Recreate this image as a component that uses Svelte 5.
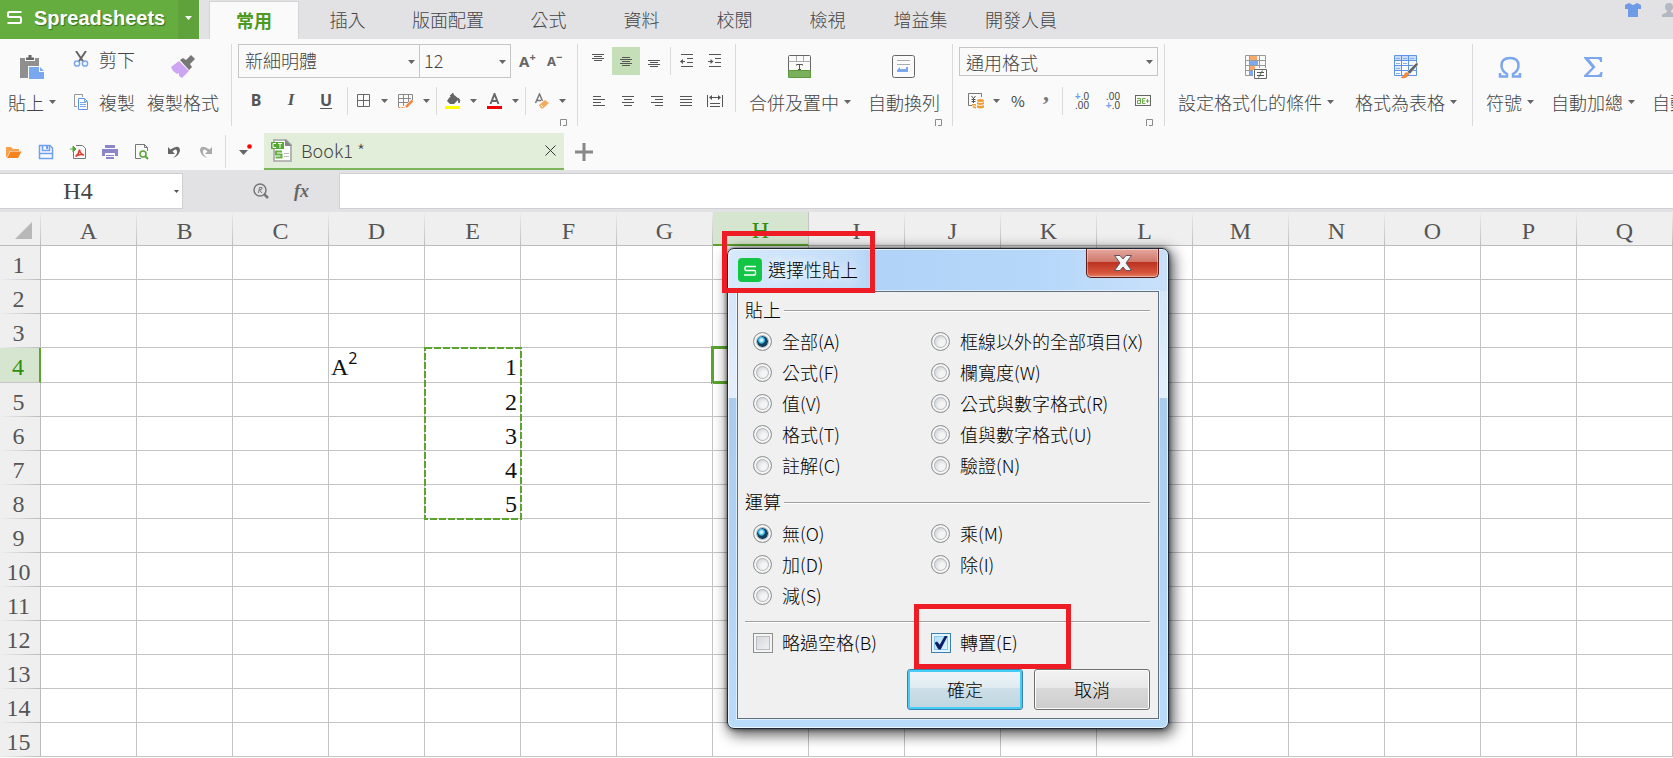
<script>
	const tabs = ['常用', '插入', '版面配置', '公式', '資料', '校閱', '檢視', '增益集', '開發人員'];
	const columns = 'ABCDEFGHIJKLMNOPQ'.split('');
	const rows = Array.from({ length: 15 }, (_, i) => i + 1);

	// values in column E, by row
	const values = { 4: 1, 5: 2, 6: 3, 7: 4, 8: 5 };

	const pasteOptions = [
		['all', '全部(A)'],
		['noborder', '框線以外的全部項目(X)'],
		['formula', '公式(F)'],
		['width', '欄寬度(W)'],
		['value', '值(V)'],
		['formulanum', '公式與數字格式(R)'],
		['format', '格式(T)'],
		['valuenum', '值與數字格式(U)'],
		['comment', '註解(C)'],
		['validation', '驗證(N)']
	];
	const mathOptions = [
		['none', '無(O)'],
		['multiply', '乘(M)'],
		['add', '加(D)'],
		['divide', '除(I)'],
		['subtract', '減(S)']
	];

	// horizontal strokes of the alignment icons: x, y, width
	const alignIcons = {
		top: [[2, 1, 12], [4, 3, 8], [2, 5, 12], [4, 7, 8]],
		middle: [[4, 4, 8], [2, 6, 12], [4, 8, 8], [2, 10, 12], [4, 12, 8]],
		bottom: [[2, 7, 12], [4, 9, 8], [2, 11, 12], [4, 13, 8]],
		left: [[2, 3, 8], [2, 6, 12], [2, 9, 8], [2, 12, 12]],
		center: [[2, 3, 12], [4, 6, 8], [2, 9, 12], [4, 12, 8]],
		right: [[2, 3, 12], [6, 6, 8], [2, 9, 12], [6, 12, 8]],
		justify: [[2, 3, 12], [2, 6, 12], [2, 9, 12], [2, 12, 12]]
	};

	let activeTab = $state('常用');
	let valign = $state('middle');
	let paste = $state('all');
	let math = $state('none');
	let skipBlanks = $state(false);
	let transpose = $state(true);
	let cellName = $state('H4');
	let formula = $state('');
</script>

{#snippet caret()}
	<svg class="caret" width="7" height="4" viewBox="0 0 7 4" aria-hidden="true"><path d="M0 0h7L3.5 4z" fill="currentColor" /></svg>
{/snippet}

{#snippet launcher(label)}
	<button class="launcher" aria-label={label}>
		<svg width="7" height="7" viewBox="0 0 7 7"><path d="M.5 7V.5H6.500V6.500H3" fill="none" stroke="#8a8a8a" /></svg>
	</button>
{/snippet}

{#snippet lines(name)}
	<svg width="16" height="16" viewBox="0 0 16 16" fill="#555">
		{#each alignIcons[name] as [x, y, w]}<rect {x} {y} width={w} height="1" />{/each}
	</svg>
{/snippet}

{#snippet radio(group, value, label, checked, pick)}
	<label class="option">
		<input type="radio" name={group} {value} {checked} onchange={() => pick(value)} />
		<span>{label}</span>
	</label>
{/snippet}

<div class="app">
	<header class="topbar">
		<button class="brand">
			<svg width="15" height="13" viewBox="0 0 15 13" fill="none" stroke="#fff" stroke-width="2"><path d="M14.500 1H2.500Q1 1 1 2.500V4.500Q1 6 2.500 6H12.500Q14 6 14 7.500V10.500Q14 12 12.500 12H.5" /></svg>
			<span>Spreadsheets</span>
		</button>
		<button class="brand-more" aria-label="選單">{@render caret()}</button>
		<nav class="tabs">
			{#each tabs as tab}
				<button class="tab" class:active={tab === activeTab} onclick={() => (activeTab = tab)}>{tab}</button>
			{/each}
		</nav>
		<div class="account">
			<svg width="16" height="14" viewBox="0 0 16 14" fill="#6f9be6"><path d="M4 0L6 1Q8 3 10 1L12 0L16 2V6H13V14H3V6H0V2z" /></svg>
			<svg width="16" height="14" viewBox="0 0 16 14" fill="#b3b9c3"><ellipse cx="8" cy="4" rx="4" ry="4" /><path d="M6 7H10V9L15 11.500V14H1V11.500L6 9z" /></svg>
		</div>
	</header>

	<div class="ribbon">
		<section class="group clipboard">
			<button class="big">
				<svg width="24" height="24" viewBox="0 0 24 24"><path d="M0 3H5V6H15V3H19V11H8V23H0z" fill="#8f8f8f" /><path d="M6 5V2.500H8.500V0H11.500V2.500H14V5z" fill="#666" /><path d="M9 12H19V17H24V24H9z" fill="#7ba7ee" /><path d="M20 12L24 16H20z" fill="#7ba7ee" /></svg>
				<span>貼上{@render caret()}</span>
			</button>
			<div class="stack">
				<button class="small">
					<svg width="16" height="16" viewBox="0 0 16 16" fill="none"><path d="M3 0L10.500 11M13 0L5.500 11" stroke="#666" stroke-width="2" /><circle cx="4" cy="12.500" r="2.600" stroke="#7ba7ee" stroke-width="1.500" /><circle cx="12" cy="12.500" r="2.600" stroke="#7ba7ee" stroke-width="1.500" /></svg>
					剪下
				</button>
				<button class="small">
					<svg width="16" height="16" viewBox="0 0 16 16" fill="none"><path d="M4 12.500H1.500V.5H9.500V3" stroke="#999" /><path d="M5.500 4.500H11.500L14.500 7.500V15.500H5.500z" fill="#fff" stroke="#5f93e8" /><path d="M7 8.500H13M7 10.500H13M7 12.500H13M11.500 4.500V7.500H14.500" stroke="#7ba7ee" /></svg>
					複製
				</button>
			</div>
			<button class="big">
				<svg width="24" height="24" viewBox="0 0 24 24"><path d="M0 12L8 6L18 16L11 23L8 21V18L6 19L2 16z" fill="#cda5f3" /><path d="M9 5L12 3L15 5L20 0L24 4L19 9L21 12L18 15z" fill="#777" /></svg>
				<span>複製格式</span>
			</button>
		</section>

		<section class="group font">
			<div class="line selects">
				<div class="pick face">
					<select aria-label="字型"><option>新細明體</option></select>
					{@render caret()}
				</div>
				<div class="pick size">
					<select aria-label="字型大小"><option>12</option></select>
					{@render caret()}
				</div>
				<button class="grow" aria-label="放大字型">A<sup>+</sup></button>
				<button class="grow less" aria-label="縮小字型">A<sup>−</sup></button>
			</div>
			<div class="line">
				<button class="letter bold">B</button>
				<button class="letter italic">I</button>
				<button class="letter under">U</button>
				<i class="sep"></i>
				<button class="split" aria-label="框線">
					<svg width="16" height="16" viewBox="0 0 16 16"><path d="M1.500 1.500H13.500V13.500H1.500zM7.500 1.500V13.500M1.500 7.500H13.500" fill="none" stroke="#666" /></svg>
					{@render caret()}
				</button>
				<button class="split next" aria-label="繪製框線">
					<svg width="16" height="16" viewBox="0 0 16 16" fill="none"><path d="M.5 14V1.500H14.500V7M5.500 1V13M10.500 1V9M0 5.500H13M0 9.500H10" stroke="#888" /><path d="M.5 14.500H7" stroke="#f08a45" stroke-dasharray="2 1" /><path d="M8 14L14.500 7.500" stroke="#f08a45" stroke-width="2.500" /></svg>
					{@render caret()}
				</button>
				<i class="sep"></i>
				<button class="split" aria-label="填滿色彩">
					<svg width="16" height="16" viewBox="0 0 16 16"><path d="M4 5L8 1L14 6L9 11H5L2 8z" fill="#666" /><path d="M5 3L8 0V5M13 5Q16 7 14 10z" stroke="#666" fill="#666" /><rect y="13" width="15" height="3" fill="#ff0" /></svg>
					{@render caret()}
				</button>
				<button class="split next" aria-label="字型色彩">
					<svg width="16" height="16" viewBox="0 0 16 16"><path d="M3.500 11L7.500 1L11.500 11M5 8H10" fill="none" stroke="#666" stroke-width="2" /><rect y="13" width="15" height="3" fill="#f00000" /></svg>
					{@render caret()}
				</button>
				<i class="sep"></i>
				<button class="split" aria-label="清除">
					<svg width="16" height="16" viewBox="0 0 16 16"><path d="M1.500 10L5.500 1L8.500 8M3 7.500H7" fill="none" stroke="#777" stroke-width="1.500" /><path d="M5 12L11 7L15 10L9 15.500H7z" fill="#f2ab5b" /><path d="M7 12L9 14" stroke="#fff" /></svg>
					{@render caret()}
				</button>
			</div>
			{@render launcher('字型設定')}
		</section>

		<section class="group align">
			<div class="line">
				{#each ['top', 'middle', 'bottom'] as name}
					<button class="cell" class:on={valign === name} aria-label={name} onclick={() => (valign = name)}>{@render lines(name)}</button>
				{/each}
				<i class="sep tight"></i>
				<button class="cell" aria-label="減少縮排">
					<svg width="16" height="16" viewBox="0 0 16 16" fill="none" stroke="#555"><path d="M2 1.500H14M8 5.500H14M8 9.500H14M2 13.500H14M1.500 8.500H6" /><path d="M1 8.500L4 6V11z" fill="#555" stroke="none" /></svg>
				</button>
				<button class="cell" aria-label="增加縮排">
					<svg width="16" height="16" viewBox="0 0 16 16" fill="none" stroke="#555"><path d="M2 1.500H14M8 5.500H14M8 9.500H14M2 13.500H14M1 8.500H5" /><path d="M6.500 8.500L3.500 6V11z" fill="#555" stroke="none" /></svg>
				</button>
			</div>
			<div class="line">
				{#each ['left', 'center', 'right', 'justify'] as name}
					<button class="cell wide" aria-label={name}>{@render lines(name)}</button>
				{/each}
				<button class="cell wide" aria-label="分散對齊">
					<svg width="16" height="16" viewBox="0 0 16 16" fill="none" stroke="#555"><path d="M.5 2V14M15.500 2V14M3 4.500H13M3 10.500H13M3 13.500H13" /><path d="M2 4.500L5 2V7zM14 4.500L11 2V7z" fill="#555" stroke="none" /></svg>
				</button>
			</div>
		</section>

		<section class="group merge">
			<button class="big">
				<svg width="24" height="24" viewBox="0 0 24 24" fill="none"><rect x="1" y="16" width="22" height="7" fill="#7ab05c" /><path d="M.5 16.500V1.500Q.5.5 1.500.5H21.500Q22.500.5 22.500 1.500V16" stroke="#666" /><path d="M.5 6.500H22.500M8.500 1V6M15.500 1V6" stroke="#aaa" /><path d="M.5 15.500H22.500V22.500H.5z" stroke="#5c9a3b" /><path d="M8.500 10.500V9.500H14.500V10.500M11.500 9.500V14M10 14.500H13" stroke="#555" /></svg>
				<span>合併及置中{@render caret()}</span>
			</button>
			<button class="big">
				<svg width="24" height="24" viewBox="0 0 24 24" fill="none"><rect x=".5" y=".5" width="22" height="22" rx="2" stroke="#666" /><path d="M5 5.500H18M5 9.500H18" stroke="#aaa" /><path d="M5 15L8 12V14H14V12H16V17H5z" fill="#7ba7ee" /></svg>
				<span>自動換列</span>
			</button>
			{@render launcher('對齊設定')}
		</section>

		<section class="group number">
			<div class="line">
				<div class="pick format">
					<select aria-label="數值格式"><option>通用格式</option></select>
					{@render caret()}
				</div>
			</div>
			<div class="line formats">
				<button class="split" aria-label="貨幣">
					<svg width="16" height="16" viewBox="0 0 16 16" fill="none"><path d="M4 12.500H.5V.5H13.500V4" stroke="#777" /><path d="M3.500 3L5.500 5.500L7.500 3M5.500 5V10M3.500 6.500H7.500M3.500 8.500H7.500" stroke="#555" /><ellipse cx="12.500" cy="7.500" rx="3.500" ry="1.500" fill="#f09c33" /><path d="M9 9Q12.500 11 16 9V11Q12.500 13 9 11zM9 12Q12.500 14 16 12V14.500Q12.500 16.500 9 14.500zM4 11H8V12.500H4zM4 13.500H8V15.500Q5 15.500 4 13.500z" fill="#f09c33" /></svg>
					{@render caret()}
				</button>
				<button class="cell percent">%</button>
				<button class="cell comma">,</button>
				<i class="sep tight"></i>
				<button class="cell digits" aria-label="增加小數位數"><span><b>+</b>.0</span><span>.00</span></button>
				<button class="cell digits" aria-label="減少小數位數"><span>.00</span><span><b>+</b>.0</span></button>
				<button class="cell last" aria-label="文字格式">
					<svg width="16" height="12" viewBox="0 0 16 12" fill="none"><rect x=".5" y=".5" width="15" height="10" stroke="#666" /><path d="M2 3.500H5.500V8.500H2.500V5.500H5M10.500 3.500H7.500V8.500H10.500M7.500 6H10M11 6H14.500M12.500 4V8" stroke="#6aa84a" /></svg>
				</button>
			</div>
			{@render launcher('數值設定')}
		</section>

		<section class="group styles">
			<button class="big">
				<svg width="24" height="24" viewBox="0 0 24 24" fill="none"><path d="M6 1H13V5H6zM6 11H11V15H6z" fill="#f8a86a" /><path d="M6 6H14V10H6zM6 16H9V20H6z" fill="#7ea9f2" /><path d="M1.500.5H21.500V13M9 20.500H1.500V.5M5.500 1V20M15.500 1V13M2 5.500H21M2 10.500H21M2 15.500H9" stroke="#999" /><path d="M10.500 14.500H22.500V23.500H10.500z" fill="#fff" stroke="#666" /><path d="M13 17.500H20M13 20.500H20M18.500 15.500L14.500 22.500" stroke="#555" /></svg>
				<span>設定格式化的條件{@render caret()}</span>
			</button>
			<button class="big">
				<svg width="24" height="24" viewBox="0 0 24 24" fill="none"><path d="M1 1H22V5H1z" fill="#c8dafa" /><path d="M1 10H8V15H1z" fill="#dce8fc" /><path d="M.5.5H22.500V20.500H.5zM7.500 1V20M14.500 1V20M1 5.500H22M1 10.500H22M1 15.500H22" stroke="#5f93e8" /><path d="M2 3.500H6M9 3.500H13M16 3.500H20M2 8.500H6M9 8.500H13M2 13.500H6M2 18.500H6" stroke="#8bb1f0" /><path d="M13 17L22 8H24V10L16 19z" fill="#666" stroke="#fff" stroke-width=".5" /><path d="M7 22Q10 21 11 18Q13 16 15 19Q14 24 7 23z" fill="#f08a3c" /></svg>
				<span>格式為表格{@render caret()}</span>
			</button>
		</section>

		<section class="group sums">
			<button class="big">
				<svg width="24" height="24" viewBox="0 0 24 24" fill="none"><path d="M2 18V21.500H9V19Q3.500 16 3.500 10.500Q3.500 3 12 3Q20.500 3 20.500 10.500Q20.500 16 15 19V21.500H22V18" stroke="#7ba7ee" stroke-width="2.500" /></svg>
				<span>符號{@render caret()}</span>
			</button>
			<button class="big">
				<svg width="24" height="24" viewBox="0 0 24 24"><path d="M3 2H21V7H19Q19 4 16 4H8L14.500 12L7 20H16Q19 20 19.500 17H21.500L21 22H3V20.500L11 12.500L3 3z" fill="#7ba7ee" /></svg>
				<span>自動加總{@render caret()}</span>
			</button>
			<button class="big">
				<svg width="24" height="24" viewBox="0 0 24 24"><path d="M2 2H22L14 12V22L10 19V12z" fill="#7ba7ee" /></svg>
				<span>自動篩選{@render caret()}</span>
			</button>
		</section>
	</div>

	<div class="docbar">
		<div class="quick">
			<button aria-label="開啟"><svg width="16" height="16" viewBox="0 0 16 16"><path d="M0 3H5L7 5H13V7H4L1 13H0z" fill="#f8a04a" /><path d="M4.500 7.500H15.500L12 14H1z" fill="#f5841f" /></svg></button>
			<button aria-label="儲存"><svg width="16" height="16" viewBox="0 0 16 16" fill="none"><path d="M1.500 1.500H12L14.500 4V14.500H1.500z" stroke="#6f9ff0" stroke-width="1.500" /><path d="M4.500 2V6.500H11.500V2M2 9.500H14" stroke="#6f9ff0" stroke-width="1.500" /><path d="M9 2V5" stroke="#6f9ff0" stroke-width="2" /></svg></button>
			<button aria-label="匯出PDF"><svg width="16" height="16" viewBox="0 0 16 16" fill="none"><path d="M6 1.500H12.500L15.500 4.500V14.500H3.500V8" stroke="#777" /><path d="M0 5H3M3 2L6 5L3 8z" stroke="#58a33a" fill="#58a33a" /><path d="M5.500 12.500Q9 10 9.500 5.500Q10 10 14 11Q10 9.500 5.500 12.500" stroke="#e03a2f" stroke-width="1.500" /></svg></button>
			<button aria-label="列印"><svg width="16" height="16" viewBox="0 0 16 16"><path d="M3 1H13V4H3zM0 5H16V12H13V9H3V12H0zM4 11H12V12H4zM4 13H12V15H4z" fill="#8a86c8" /></svg></button>
			<button aria-label="預覽列印"><svg width="16" height="16" viewBox="0 0 16 16" fill="none"><path d="M7 14.500H1.500V.5H10.500L13.500 3.500V7" stroke="#777" /><path d="M10.500.5V3.500H13.500" stroke="#777" /><circle cx="9" cy="10" r="3" stroke="#58a33a" stroke-width="1.500" /><path d="M11 12L14 15" stroke="#58a33a" stroke-width="2" /></svg></button>
			<button aria-label="復原"><svg width="16" height="16" viewBox="0 0 16 16"><path d="M2 3V10H9L6.500 7.500Q10 4 11 7Q12 10 7 14Q14 11 14 6Q13 0 4.500 5.500z" fill="#666" /></svg></button>
			<button aria-label="重做"><svg width="16" height="16" viewBox="0 0 16 16"><path d="M14 3V10H7L9.500 7.500Q6 4 5 7Q4 10 9 14Q2 11 2 6Q3 0 11.500 5.500z" fill="#aaa" /></svg></button>
		</div>
		<i class="sep tall"></i>
		<button class="recent" aria-label="最近使用"><svg width="14" height="12" viewBox="0 0 14 12"><path d="M0 6H9L4.500 11z" fill="#666" /><circle cx="10.500" cy="2.500" r="2.300" fill="#f00" /></svg></button>
		<div class="doc">
			<svg width="22" height="24" viewBox="0 0 22 24"><path d="M3 1H15L20 6V22H3z" fill="#fff" stroke="#b5b5b5" stroke-width="2" /><path d="M14 0L21 7H14z" fill="#888" /><rect y="3" width="13" height="7" fill="#58a835" /><path d="M5 4.500H2V8.500H5M7 4.500H11M9 4.500V9" stroke="#fff" fill="none" /><path d="M11 12.500H5V15.500H10.500V18.500H4.500" stroke="#66b042" stroke-width="2" fill="none" /><path d="M13 14.500H18M13 17.500H18M6 21.500H18" stroke="#bbb" /></svg>
			<span>Book1 *</span>
			<button aria-label="關閉"><svg width="11" height="11" viewBox="0 0 11 11"><path d="M.5.5L10.500 10.500M10.500.5L.5 10.500" stroke="#333" /></svg></button>
		</div>
		<button class="add" aria-label="新增活頁簿"><svg width="18" height="18" viewBox="0 0 18 18"><path d="M9 0V18M0 9H18" stroke="#888" stroke-width="3" /></svg></button>
	</div>

	<div class="formulabar">
		<div class="namebox">
			<input aria-label="名稱方塊" bind:value={cellName} />
			<svg width="5" height="3" viewBox="0 0 5 3" aria-hidden="true"><path d="M0 0H5L2.500 3z" fill="#555" /></svg>
		</div>
		<div class="fx">
			<button aria-label="搜尋"><svg width="16" height="16" viewBox="0 0 16 16" fill="none" stroke="#777"><circle cx="7" cy="7" r="6" stroke-width="1.500" /><path d="M11 11L15 15" stroke-width="2.500" /><path d="M5.500 10L6.500 4.500H9Q10 6.500 6.500 7L9 10" /></svg></button>
			<button class="fn">fx</button>
		</div>
		<input class="formula" aria-label="公式" bind:value={formula} />
	</div>

	<div class="sheet">
		<table>
			<thead>
				<tr>
					<th class="corner"><svg width="17" height="17" viewBox="0 0 17 17"><path d="M17 0V17H0z" fill="#b8b8b8" /></svg></th>
					{#each columns as col}
						<th class:current={col === 'H'}>{col}</th>
					{/each}
				</tr>
			</thead>
			<tbody>
				{#each rows as row}
					<tr class:taller={row === 4}>
						<th class:current={row === 4}>{row}</th>
						{#each columns as col}
							{#if col === 'D' && row === 4}
								<td>A<sup>2</sup></td>
							{:else if col === 'E' && values[row]}
								<td class="num">
									{values[row]}
									{#if row === 4}
										<svg class="ants" width="98" height="173" viewBox="0 0 98 173"><rect x="1" y="1" width="96" height="171" fill="none" stroke="#5ba52f" stroke-width="2" stroke-dasharray="7 2" /></svg>
									{/if}
								</td>
							{:else if col === 'H' && row === 4}
								<td><div class="cursor"></div></td>
							{:else}
								<td></td>
							{/if}
						{/each}
					</tr>
				{/each}
			</tbody>
		</table>
	</div>

	<div class="dialog" role="dialog" aria-labelledby="dialog-title">
		<div class="titlebar">
			<svg width="24" height="24" viewBox="0 0 24 24" fill="none"><rect width="24" height="24" rx="4" fill="#12c544" /><path d="M18 8.500H8Q7 8.500 7 10V11Q7 12.500 8 12.500H16.500Q17.500 12.500 17.500 14V15.500Q17.500 17 16.500 17H6" stroke="#fff" stroke-width="1.500" /></svg>
			<h2 id="dialog-title">選擇性貼上</h2>
			<button class="close" aria-label="關閉">
				<svg width="20" height="18" viewBox="0 0 20 18"><path d="M1.500 1.500H7L10 5L13 1.500H18.500L13 9L18.500 16.500H13L10 13L7 16.500H1.500L7 9z" fill="#f6f6f6" stroke="#5b5560" /></svg>
			</button>
		</div>
		<div class="client">
			<div role="radiogroup" aria-labelledby="legend-paste">
				<div class="legend"><span id="legend-paste">貼上</span></div>
				<div class="options">
					{#each pasteOptions as [value, label]}
						{@render radio('paste', value, label, paste === value, (v) => (paste = v))}
					{/each}
				</div>
			</div>
			<div class="math" role="radiogroup" aria-labelledby="legend-math">
				<div class="legend"><span id="legend-math">運算</span></div>
				<div class="options">
					{#each mathOptions as [value, label]}
						{@render radio('math', value, label, math === value, (v) => (math = v))}
					{/each}
				</div>
			</div>
			<div class="options checks">
				<label class="option">
					<input type="checkbox" bind:checked={skipBlanks} />
					<span>略過空格(B)</span>
				</label>
				<label class="option">
					<input type="checkbox" bind:checked={transpose} />
					<span>轉置(E)</span>
				</label>
			</div>
			<div class="actions">
				<button class="ok">確定</button>
				<button>取消</button>
			</div>
		</div>
		<div class="mark mark-title"></div>
		<div class="mark mark-transpose"></div>
	</div>
</div>

<style>
	:global(body) {
		background: #fff;
	}

	.app {
		--bar: #e2e2e4;
		--panel: #fafafa;
		--green: #5ba52f;
		--rule: #dadadc;
		position: relative;
		min-height: 100vh;
		overflow: hidden;
		color: #444;
		font: 300 18px/28px "Noto Sans CJK TC", "Liberation Sans", sans-serif;
	}

	.app :is(button, input, select) {
		box-sizing: border-box;
		margin: 0;
		padding: 0;
		border: 0;
		border-radius: 0;
		background: none;
		color: inherit;
		font: inherit;
		outline: none;
	}

	.app :is(button, h2, svg) {
		flex: none;
	}

	svg {
		display: block;
	}

	.caret {
		color: #666;
	}

	/* top bar */
	.topbar {
		display: flex;
		height: 39px;
		background: var(--bar);
	}

	.topbar .brand {
		display: flex;
		align-items: center;
		gap: 12px;
		width: 178px;
		padding: 0 0 4px 7px;
		background: #66ad3f;
		color: #fff;
		font: bold 20px/28px "Liberation Sans", sans-serif;
		text-shadow: 1px 1px 1px #35701a;
	}

	.topbar .brand-more {
		display: grid;
		place-items: center;
		width: 21px;
		padding-bottom: 3px;
		background: #5fa23c;
	}

	.brand-more .caret {
		color: #fff;
	}

	.tabs {
		display: flex;
		padding-left: 8px;
	}

	.tabs .tab {
		min-width: 93px;
		padding: 0 18px 2px;
	}

	.tabs .active {
		min-width: 90px;
		margin: 1px 2px 0;
		border: 1px solid #d4d4d6;
		border-bottom: 0;
		background: var(--panel);
		color: #4c9a22;
		font-weight: 700;
	}

	.account {
		display: flex;
		gap: 20px;
		margin-left: auto;
		margin-right: -4px;
		padding-top: 3px;
	}

	/* ribbon */
	.ribbon {
		display: flex;
		height: 82px;
		padding: 5px 0 7px;
		background: var(--panel);
	}

	.group {
		display: flex;
		flex: none;
		border-right: 1px solid var(--rule);
	}

	.big {
		display: flex;
		flex-direction: column;
		align-items: center;
		gap: 9px;
		align-self: start;
		margin-top: 11px !important;
	}

	.big span {
		display: flex;
		align-items: center;
		gap: 5px;
		white-space: nowrap;
	}

	.clipboard {
		padding: 0 12px 0 8px;
	}

	.stack {
		display: flex;
		flex-direction: column;
		gap: 15px;
		margin: 1px 12px 0 17px;
	}

	.small {
		display: flex;
		align-items: center;
		gap: 10px;
	}

	.font,
	.align,
	.number {
		display: grid;
		grid-template-rows: 34px 28px 2px;
		row-gap: 9px;
	}

	.font {
		padding: 0 10px 0 4px;
	}

	.line {
		display: flex;
		align-items: center;
	}

	.selects {
		padding-left: 2px;
	}

	.pick {
		display: grid;
		align-items: center;
		border: 1px solid #c6c6c8;
	}

	.pick > :global(*) {
		grid-area: 1 / 1;
	}

	.pick .caret {
		justify-self: end;
		margin: 2px 4px 0 0;
		pointer-events: none;
	}

	.app .pick select {
		width: 100%;
		height: 32px;
		padding: 0 0 3px 6px;
		appearance: none;
	}

	.pick {
		box-sizing: border-box;
	}

	.face {
		width: 182px;
	}

	.size {
		width: 91px;
		border-left: 0;
	}

	.app .size select {
		padding-left: 4px;
	}

	.format {
		width: 199px;
	}

	.app .format select {
		height: 27px;
	}

	.app .grow {
		width: 26px;
		margin-left: 8px;
		color: #666;
		font: bold 15px/28px "Noto Sans", sans-serif;
		text-align: left;
		white-space: nowrap;
	}

	.app .grow.less {
		width: 20px;
		margin-left: 2px;
		font-size: 13px;
	}

	.grow sup {
		font-size: 11px;
		line-height: 1px;
	}

	.app .letter {
		width: 35px;
		padding: 0 0 2px 5px;
		color: #555;
		font: bold 16px/24px "Noto Sans", sans-serif;
	}

	.app .italic {
		font: italic bold 17px/24px "Liberation Serif", serif;
	}

	.under {
		text-decoration: underline;
		text-underline-offset: 2px;
	}

	.sep {
		width: 1px;
		height: 28px;
		margin: 0 8px 0 6px;
		background: var(--rule);
	}

	.sep.tight {
		margin: 0 2px;
	}

	.split {
		display: flex;
		align-items: center;
		gap: 9px;
	}

	.app .next {
		margin-left: 10px;
	}

	.launcher {
		justify-self: end;
		align-self: end;
		height: 7px;
	}

	.align {
		height: 68px;
		padding: 0 6px;
	}

	.cell {
		display: grid;
		place-items: center;
		width: 28px;
		height: 28px;
	}

	.app .cell.on {
		background: #c5e0b8;
	}

	.cell.wide {
		width: 29px;
	}

	.merge {
		gap: 17px;
		padding: 0 10px 0 13px;
	}

	.merge .launcher {
		margin-left: -22px;
	}

	.number {
		padding: 0 6px;
	}

	.number .launcher {
		margin-right: 5px;
	}

	.formats {
		padding-left: 9px;
	}

	.app .percent {
		margin-left: 4px;
		font-size: 15px;
		font-weight: 400;
	}

	.app .comma {
		padding-bottom: 18px;
		color: #777;
		font: bold 24px/10px "Liberation Serif", serif;
	}

	.app .digits {
		width: 31px;
		align-content: center;
		justify-items: end;
		padding-right: 7px;
		font: 400 10px/9px "Liberation Sans", sans-serif;
	}

	.digits b {
		color: #6f9ff0;
	}

	.app .last {
		width: 31px;
	}

	.styles {
		gap: 21px;
		padding: 0 15px 0 13px;
	}

	.sums {
		gap: 17px;
		padding-left: 13px;
		border: 0;
	}

	/* document tabs */
	.docbar {
		display: flex;
		align-items: center;
		height: 37px;
		background: var(--panel);
	}

	.quick {
		display: flex;
		gap: 16px;
		padding-left: 6px;
	}

	.sep.tall {
		height: 33px;
		margin: 0 13px 0 11px;
	}

	.app .recent {
		width: 25px;
		padding-bottom: 4px;
	}

	.doc {
		box-sizing: border-box;
		display: flex;
		align-items: center;
		width: 300px;
		height: 37px;
		padding: 0 8px 0 7px;
		border-bottom: 2px solid #7cb65c;
		background: #e2eed9;
	}

	.doc span {
		flex: 1;
		padding: 0 0 2px 8px;
	}

	.app .add {
		margin-left: 11px;
	}

	/* formula bar */
	.formulabar {
		display: flex;
		height: 36px;
		padding: 3px 0;
		background: var(--bar);
	}

	.namebox {
		display: flex;
		align-items: center;
		width: 182px;
		border: 1px solid #d0d0d4;
		border-left: 0;
		background: #fff;
	}

	.app .namebox input {
		flex: 1;
		min-width: 0;
		height: 34px;
		padding-right: 18px;
		font: 24px/28px "Liberation Serif", serif;
		text-align: center;
	}

	.namebox svg {
		margin-right: 3px;
	}

	.fx {
		display: flex;
		align-items: center;
		gap: 25px;
		width: 86px;
		padding-left: 70px;
	}

	.app .fn {
		font: italic bold 18px/28px "Liberation Serif", serif;
		color: #666;
	}

	.app .formula {
		flex: 1;
		border: 1px solid #d0d0d4;
		border-right: 0;
		background: #fff;
	}

	/* sheet */
	table {
		width: 1673px;
		table-layout: fixed;
		border-collapse: separate;
		border-spacing: 0;
		color: #111;
		font: 24px/28px "Liberation Serif", serif;
	}

	th,
	td {
		box-sizing: border-box;
		position: relative;
		width: 96px;
		height: 34px;
		padding: 4px 2px 0;
		border-right: 1px solid #c4c4c4;
		border-bottom: 1px solid #c4c4c4;
		text-align: left;
		line-height: 28px;
	}

	.taller > * {
		height: 35px;
	}

	th {
		background: #efefef;
		color: #555;
		font-weight: 400;
		text-align: center;
	}

	thead th {
		border-image: linear-gradient(#efefef, #bbb) 1;
	}

	tbody th,
	.corner {
		width: 41px;
	}

	tbody th {
		padding-right: 5px;
		border-image: linear-gradient(90deg, #efefef, #bbb) 1;
	}

	th.current {
		background: #d6e5cf;
		color: #2f8f0c;
		border-image: none;
	}

	thead .current {
		border-bottom: 2px solid var(--green);
	}

	tbody .current {
		border-right: 2px solid var(--green);
	}

	.corner svg {
		margin-left: 13px;
	}

	td sup {
		font: 16px/1px "Noto Sans", sans-serif;
		vertical-align: 11px;
	}

	.num {
		text-align: right;
		padding-right: 3px;
	}

	.ants {
		position: absolute;
		top: -1px;
		left: -1px;
		z-index: 1;
	}

	.cursor {
		position: absolute;
		inset: -2px;
		border: 3px solid var(--green);
	}

	/* paste special dialog */
	.dialog {
		position: absolute;
		top: 248px;
		left: 727px;
		z-index: 2;
		width: 422px;
		padding: 0 9px 9px;
		border: 1px solid #1d2836;
		border-radius: 7px;
		background:
			linear-gradient(90deg, #d8eafd, #c2dcf8 28%, #b0d3f7 34%, #b5d7fa 70%, #c9e0fa) 0 0 / 100% 42px no-repeat,
			linear-gradient(#cfe3fa, #e3effc 149px, #a8cbee 149px, #b9dcfd);
		box-shadow:
			inset 0 0 0 1px #ffffffb0,
			0 0 4px #000000a0,
			3px 4px 14px 2px #000000a0;
		color: #000;
	}

	.titlebar {
		display: flex;
		align-items: center;
		gap: 6px;
		height: 42px;
		padding-left: 1px;
	}

	h2 {
		margin: 0;
		padding-bottom: 3px;
		font: inherit;
		text-shadow: 0 0 8px #fff, 0 0 12px #fff;
	}

	.app .close {
		display: grid;
		place-items: center;
		align-self: start;
		width: 73px;
		height: 29px;
		margin-left: auto;
		border: 1px solid #5a1f1c;
		border-top: 0;
		border-radius: 0 0 5px 5px;
		background: linear-gradient(#e5a79d, #d0796c 45%, #bb3020 46%, #d6553c 85%, #e58068);
		box-shadow: inset 0 0 0 1px #ffffff60;
	}

	.client {
		padding: 4px 8px 8px 7px;
		border: 1px solid #5f6f80;
		background: #f0f0f0;
		box-shadow: 0 0 0 1px #ffffff90;
	}

	.legend {
		display: flex;
		align-items: center;
		gap: 3px;
		height: 28px;
	}

	.legend span,
	.option span {
		padding-bottom: 2px;
	}

	.legend::after {
		content: '';
		flex: 1;
		height: 1px;
		background: #a0a0a0;
		box-shadow: 0 1px #fff;
	}

	.math {
		margin-top: 7px;
	}

	.options {
		display: grid;
		grid-template-columns: 178px 1fr;
		padding: 2px 0 0 8px;
	}

	.option {
		display: flex;
		align-items: center;
		gap: 10px;
		height: 31px;
		white-space: nowrap;
	}

	.app .option input {
		appearance: none;
		flex: none;
		width: 19px;
		height: 19px;
		border: 1px solid #8e8f8f;
		background: #f6f6f6;
	}

	.app .option input[type='radio'] {
		border-radius: 50%;
		background: radial-gradient(circle at 60% 60%, #f4f4f4 20%, #d4d7db 55%) padding-box;
		box-shadow: inset 0 0 0 2px #f6f6f6, inset 0 0 0 3px #b4b9be;
	}

	.app .option input[type='radio']:checked {
		background:
			radial-gradient(circle at 44% 42%, #d5f6ff 1px, #35b5e0 3px, transparent 4px),
			radial-gradient(circle, #12405f 5px, #c3cdd5 6px);
	}

	.app .option input[type='checkbox'] {
		width: 20px;
		height: 20px;
		margin-right: -1px;
		background: linear-gradient(135deg, #cfd2d8, #f6f6f6);
		box-shadow: inset 0 0 0 2px #f4f4f4, inset 0 0 0 3px #b9bcc2;
	}

	.app .option input[type='checkbox']:checked {
		display: grid;
		place-items: center;
		border-color: #3c7fb1;
		background: linear-gradient(135deg, #a6dcf8, #e6f7fe);
		box-shadow: inset 0 0 0 2px #e4f5fd, inset 0 0 0 3px #8cc8ec;
	}

	.option input[type='checkbox']:checked::after {
		content: '';
		width: 13px;
		height: 14px;
		background: #0b1f6b;
		clip-path: polygon(0 52%, 20% 42%, 40% 66%, 80% 0, 100% 6%, 48% 100%, 30% 100%);
	}

	.checks {
		margin: 10px 0 0;
		padding-top: 5px;
		border-top: 1px solid #a0a0a0;
		box-shadow: inset 0 1px #fff;
	}

	.actions {
		display: flex;
		justify-content: flex-end;
		gap: 11px;
		margin-top: 11px;
	}

	.app .actions button {
		width: 116px;
		height: 41px;
		padding-bottom: 2px;
		border: 1px solid #707070;
		border-radius: 3px;
		background: linear-gradient(#f2f2f2, #e8e8e8 46%, #d9d9d9 47%, #cdcdcd);
		box-shadow: inset 0 0 0 1px #fcfcfc;
	}

	.app .actions .ok {
		border-color: #3c7fb1;
		background: linear-gradient(#eef5f9, #dfebf1 46%, #cddfe8 47%, #c0d5e0);
		box-shadow: inset 0 0 0 2px #46cdf5;
	}

	/* highlight frames */
	.mark {
		box-sizing: border-box;
		position: absolute;
		border: 5px solid #ee1c24;
		pointer-events: none;
	}

	.mark-title {
		top: -18px;
		left: -6px;
		width: 153px;
		height: 62px;
	}

	.mark-transpose {
		top: 355px;
		left: 186px;
		width: 157px;
		height: 65px;
	}
</style>
